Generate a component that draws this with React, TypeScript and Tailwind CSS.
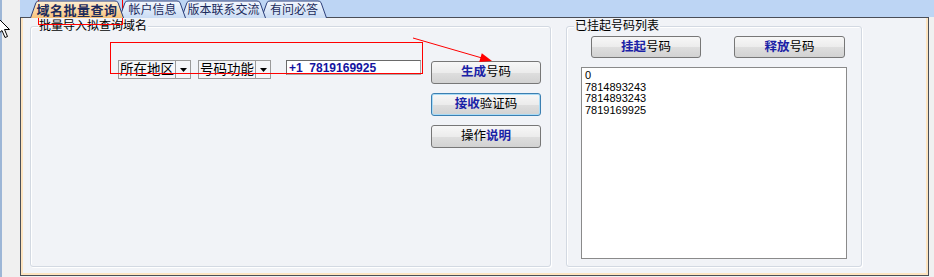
import React from 'react';

const TABS = [
  { label: '域名批量查询', w: 94, selected: true },
  { label: '帐户信息', w: 67 },
  { label: '版本联系交流', w: 85 },
  { label: '有问必答', w: 66 },
];

function TabShape({ w, selected }: { w: number; selected?: boolean }) {
  const id = selected ? 'tabSel' : 'tabNorm';
  return (
    <svg width={w} height={18} viewBox={`0 0 ${w} 18`} className="absolute left-0 top-0">
      <defs>
        <linearGradient id={id} x1="0" y1="0" x2="0" y2="1">
          {selected ? (
            <>
              <stop offset="0" stopColor="#fff1d6" />
              <stop offset="1" stopColor="#f7c27a" />
            </>
          ) : (
            <>
              <stop offset="0" stopColor="#f4f8fe" />
              <stop offset="1" stopColor="#cadcf4" />
            </>
          )}
        </linearGradient>
      </defs>
      <path
        d={`M0.5 18 L6 2.5 Q7 1 9 1 L${w - 9} 1 Q${w - 7} 1 ${w - 6} 2.5 L${w - 0.5} 18`}
        fill={`url(#${id})`}
        stroke="#2c3f7a"
        strokeWidth={1}
      />
    </svg>
  );
}

function Btn({ bold, rest, boldFirst = true, focused, w = 110, h = 23 }: { bold: string; rest: string; boldFirst?: boolean; focused?: boolean; w?: number; h?: number }) {
  return (
    <div
      className={`flex items-center justify-center whitespace-nowrap rounded-[3px] border text-[12.5px] leading-none bg-[linear-gradient(#f7f7f7_0%,#ececec_50%,#dedede_52%,#d2d2d2_100%)] ${
        focused ? 'border-[#3c7fb1] shadow-[inset_0_0_0_1px_#a9dbf6]' : 'border-[#777777]'
      }`}
      style={{ width: w, height: h }}
    >
      {boldFirst ? (
        <>
          <span className="font-bold text-[#1a22a6]">{bold}</span>
          <span className="text-black">{rest}</span>
        </>
      ) : (
        <>
          <span className="text-black">{rest}</span>
          <span className="font-bold text-[#1a22a6]">{bold}</span>
        </>
      )}
    </div>
  );
}

function Combo({ label }: { label: string }) {
  return (
    <div className="flex h-[19px] w-[73px] border border-[#9a9a9a] bg-[#f4f5f8]">
      <div className="flex flex-1 items-center overflow-hidden whitespace-nowrap pl-px text-[13.5px] leading-none text-black">{label}</div>
      <div className="flex w-[15px] shrink-0 items-center justify-center border-l border-[#9a9a9a]">
        <svg width={7} height={4} viewBox="0 0 7 4">
          <path d="M0 0 L7 0 L3.5 4 Z" fill="#000" />
        </svg>
      </div>
    </div>
  );
}

function GroupBox({ title, className, children }: { title: string; className: string; children: React.ReactNode }) {
  return (
    <div className={`relative rounded-[3px] border border-[#d3d9e2] shadow-[inset_1px_1px_0_#ffffff,1px_1px_0_#ffffff] ${className}`}>
      <div className="absolute left-[7px] top-[-8px] bg-[#f1f3f7] px-px text-[12px] leading-[14px] text-black">{title}</div>
      {children}
    </div>
  );
}

export default function App() {
  return (
    <div className="relative flex h-[277px] w-[934px] overflow-hidden bg-[#f0f0f0] font-['Liberation_Sans','Noto_Sans_CJK_SC',sans-serif]">
      {/* left window edge */}
      <div className="relative w-[20px] shrink-0">
        <div className="absolute left-0 top-0 h-full w-[2px] bg-[#9db6d6]" />
        <svg width={14} height={22} viewBox="0 0 14 22" className="absolute left-[-3px] top-[17px]">
          <path d="M1 1 L1 17 L5 13.5 L8 20.5 L10.5 19.5 L7.5 12.5 L12.5 12.5 Z" fill="#fff" stroke="#000" strokeWidth={1} strokeLinejoin="round" />
        </svg>
      </div>

      <div className="flex flex-1 flex-col">
        {/* tab strip */}
        <div className="flex h-[17px] shrink-0 items-end bg-[#bdd5f4] pl-[10px]">
          {TABS.map((t, i) => (
            <div
              key={t.label}
              className={`relative flex h-[17px] items-center justify-center ${i > 0 ? 'ml-[-5px]' : ''} ${
                i === 0 ? 'z-40' : i === 1 ? 'z-30' : i === 2 ? 'z-20' : 'z-10'
              }`}
              style={{ width: t.w }}
            >
              <TabShape w={t.w} selected={t.selected} />
              <span
                className={`relative mt-[3px] whitespace-nowrap leading-none text-[#1c2b5c] ${
                  t.selected ? 'text-[13px] font-bold tracking-[0.5px]' : 'text-[12px]'
                }`}
              >
                {t.label}
              </span>
            </div>
          ))}
        </div>

        {/* panel */}
        <div className="flex h-[259px] w-[909px] border border-[#4a4e57] bg-[#f1f3f7]">
          <div className="flex flex-1 border-x-2 border-b-2 border-[#fde4c0] pl-[7px] pt-[8px]">
            <GroupBox title="批量导入拟查询域名" className="h-[241px] w-[521px]">
              <div className="flex pl-[87px] pt-[33px]">
                <Combo label="所在地区" />
                <div className="ml-[7px]">
                  <Combo label="号码功能" />
                </div>
                <div className="ml-[15px] flex h-[15px] w-[135px] items-center whitespace-nowrap border border-[#a8a8a8] border-l-[#6a6a6a] border-t-[#6a6a6a] bg-white pl-[2px] text-[12px] font-bold leading-none text-[#1414a0]">
                  +1&nbsp;&nbsp;7819169925
                </div>
                <div className="ml-[10px] mt-px flex flex-col gap-[9px]">
                  <Btn bold="生成" rest="号码" />
                  <Btn bold="接收" rest="验证码" focused />
                  <Btn bold="说明" rest="操作" boldFirst={false} />
                </div>
              </div>
            </GroupBox>

            <GroupBox title="已挂起号码列表" className="ml-[15px] h-[241px] w-[296px]">
              <div className="flex gap-[33px] pl-[24px] pt-[9px]">
                <Btn bold="挂起" rest="号码" h={22} />
                <Btn bold="释放" rest="号码" w={111} h={22} />
              </div>
              <div className="ml-[14px] mt-[9px] h-[192px] w-[266px] border border-[#8a8a8a] bg-white pl-[3px] pt-[2px] text-[11px] leading-[11.6px] text-black">
                <div>0</div>
                <div>7814893243</div>
                <div>7814893243</div>
                <div>7819169925</div>
              </div>
            </GroupBox>
          </div>
        </div>
      </div>

      {/* red annotations */}
      <div className="pointer-events-none absolute left-[38px] top-[-1px] h-[26px] w-[85px] border border-[#ff0000]" />
      <div className="pointer-events-none absolute left-[110px] top-[42px] h-[32px] w-[313px] border border-[#ff0000]" />
      <svg width={934} height={277} className="pointer-events-none absolute left-0 top-0">
        <line x1={413} y1={38} x2={482} y2={58} stroke="#ff0000" strokeWidth={1} />
        <polygon points="492,61 479.2,61.9 481.8,53.3" fill="#ff0000" />
      </svg>
    </div>
  );
}
